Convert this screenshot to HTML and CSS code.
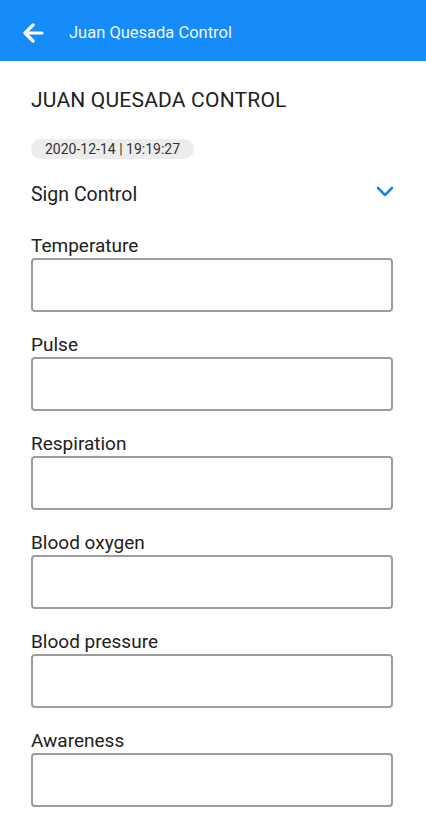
FILE: index.html
```html
<!DOCTYPE html>
<html>
<head>
<meta charset="utf-8">
<link rel="stylesheet" href="styles.css">
</head>
<body>
<header class="appbar">
  <svg class="back" width="22" height="20" viewBox="0 0 22 20"><path d="M20 10H3M11 2L3 10l8 8" fill="none" stroke="#fff" stroke-width="3.2" stroke-linecap="round" stroke-linejoin="round"/></svg>
  <span class="appbar-title">Juan Quesada Control</span>
</header>
<main class="content">
  <h1 class="title">JUAN QUESADA CONTROL</h1>
  <div class="pill">2020-12-14 | 19:19:27</div>
  <div class="section">
    <span class="section-name">Sign Control</span>
    <svg class="chev" width="18" height="11" viewBox="0 0 18 11"><path d="M2 2l7 7 7-7" fill="none" stroke="#1a86e8" stroke-width="2.6" stroke-linecap="round" stroke-linejoin="round"/></svg>
  </div>
  <div class="field"><label class="label">Temperature</label><div class="input"></div></div>
  <div class="field"><label class="label">Pulse</label><div class="input"></div></div>
  <div class="field"><label class="label">Respiration</label><div class="input"></div></div>
  <div class="field"><label class="label">Blood oxygen</label><div class="input"></div></div>
  <div class="field"><label class="label">Blood pressure</label><div class="input"></div></div>
  <div class="field"><label class="label">Awareness</label><div class="input"></div></div>
</main>
</body>
</html>
```
FILE: styles.css
```css
html, body { margin: 0; padding: 0; background: #fff; }
body { font-family: Roboto, "Noto Sans", sans-serif; color: #212121; width: 426px; height: 818px; overflow: hidden; }
.appbar { height: 61px; box-sizing: border-box; padding-top: 3px; background: #168bfa; display: flex; align-items: center; padding-left: 22px; }
.back { margin-top: 1px; }
.appbar-title { color: #eef7ff; font-size: 16.5px; margin-left: 25px; }
.content { padding: 0 33px 0 31px; }
.title { font-size: 21px; font-weight: 400; margin: 27px 0 0; line-height: 25px; color: #212121; letter-spacing: 0.2px; }
.pill { display: inline-block; margin-top: 26px; background: #ececec; border-radius: 10px; font-size: 14px; line-height: 20px; padding: 0 14px; color: #333; }
.section { display: flex; justify-content: space-between; align-items: flex-start; margin-top: 24px; }
.section-name { font-size: 19.5px; line-height: 24px; }
.chev { margin-top: 3px; margin-right: -1px; }
.field { margin-top: 28px; }
.field + .field { margin-top: 22px; }
.label { display: block; font-size: 19px; line-height: 22px; color: #212121; }
.input { margin-top: 1px; height: 50px; border: 2px solid #9c9c9c; border-radius: 4px; }
```
